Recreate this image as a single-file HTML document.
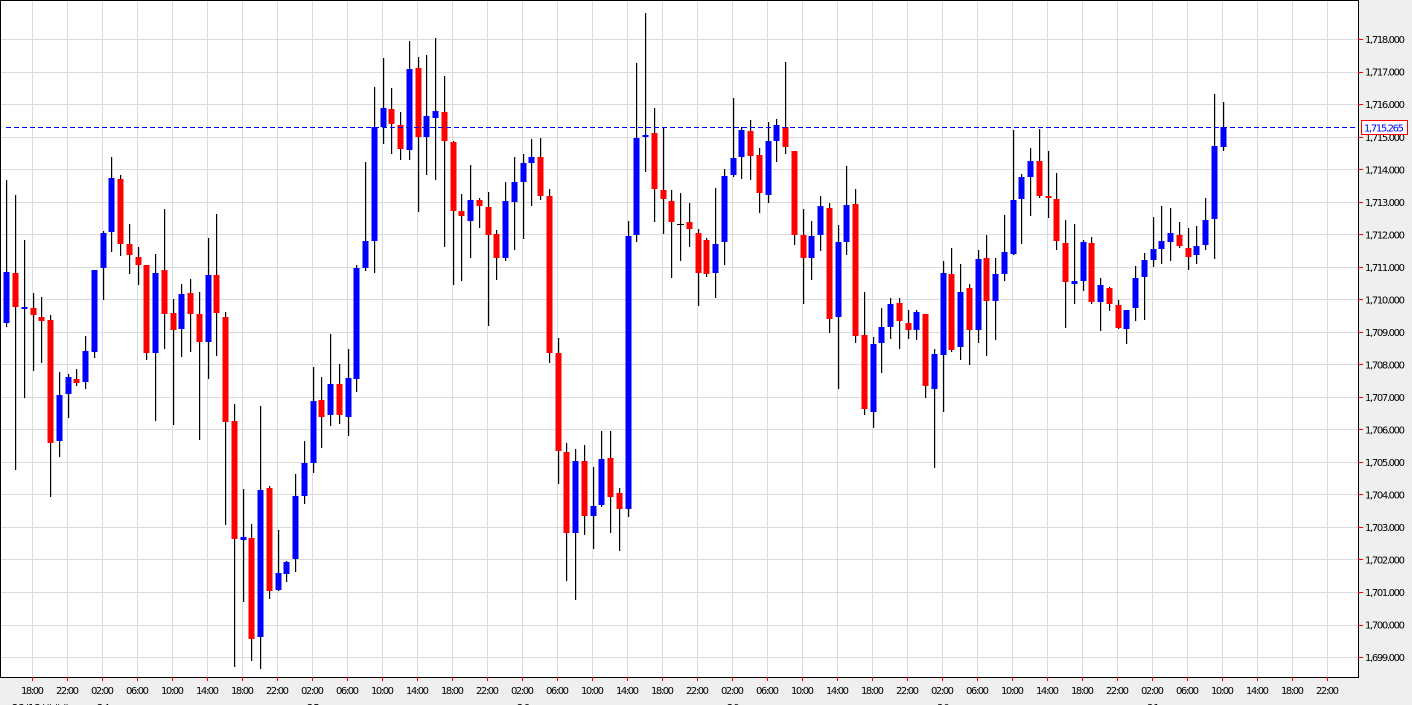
<!DOCTYPE html>
<html><head><meta charset="utf-8"><style>
html,body{margin:0;padding:0;background:#efefef;overflow:hidden}
svg{display:block}
text{font-family:"DejaVu Sans","Liberation Sans",sans-serif;fill:#000}
</style></head><body>
<svg id="s" width="1412" height="705" xmlns="http://www.w3.org/2000/svg">
<rect x="0" y="0" width="1412" height="705" fill="#efefef"/>
<rect x="0" y="0" width="1358" height="677" fill="#fff"/>
<g id="grid" stroke="#dcdcdc" stroke-width="1"></g>
<g id="candles"></g>
<line x1="6" y1="127.5" x2="1358" y2="127.5" stroke="#0000ff" stroke-width="1" stroke-dasharray="5,3"/>
<rect x="0.5" y="0.5" width="1358" height="677" fill="none" stroke="#000" stroke-width="1"/>
<g id="ticks" stroke="#f00" stroke-width="1"></g>
<g font-size="10">
<text x="1365" y="43" textLength="40">1,718.000</text>
<text x="1365" y="75.5" textLength="40">1,717.000</text>
<text x="1365" y="108" textLength="40">1,716.000</text>
<text x="1365" y="141" textLength="40">1,715.000</text>
<text x="1365" y="173.5" textLength="40">1,714.000</text>
<text x="1365" y="206" textLength="40">1,713.000</text>
<text x="1365" y="238.5" textLength="40">1,712.000</text>
<text x="1365" y="271" textLength="40">1,711.000</text>
<text x="1365" y="303.5" textLength="40">1,710.000</text>
<text x="1365" y="336" textLength="40">1,709.000</text>
<text x="1365" y="368.5" textLength="40">1,708.000</text>
<text x="1365" y="401" textLength="40">1,707.000</text>
<text x="1365" y="433.5" textLength="40">1,706.000</text>
<text x="1365" y="466" textLength="40">1,705.000</text>
<text x="1365" y="498.5" textLength="40">1,704.000</text>
<text x="1365" y="531" textLength="40">1,703.000</text>
<text x="1365" y="563.5" textLength="40">1,702.000</text>
<text x="1365" y="596" textLength="40">1,701.000</text>
<text x="1365" y="628.5" textLength="40">1,700.000</text>
<text x="1365" y="661" textLength="40">1,699.000</text>
</g>
<rect x="1361.5" y="120.5" width="46" height="14" fill="#fff" stroke="#f00" stroke-width="1"/>
<text x="1364" y="131.5" font-size="10" textLength="40" style="fill:#00f">1,715.265</text>
<g id="tl" font-size="10">
<text x="21" y="694" textLength="23">18:00</text><text x="56" y="694" textLength="23">22:00</text><text x="91" y="694" textLength="23">02:00</text><text x="126" y="694" textLength="23">06:00</text><text x="161" y="694" textLength="23">10:00</text><text x="196" y="694" textLength="23">14:00</text>
<text x="231" y="694" textLength="23">18:00</text><text x="266" y="694" textLength="23">22:00</text><text x="301" y="694" textLength="23">02:00</text><text x="336" y="694" textLength="23">06:00</text><text x="371" y="694" textLength="23">10:00</text><text x="406" y="694" textLength="23">14:00</text>
<text x="441" y="694" textLength="23">18:00</text><text x="476" y="694" textLength="23">22:00</text><text x="511" y="694" textLength="23">02:00</text><text x="546" y="694" textLength="23">06:00</text><text x="581" y="694" textLength="23">10:00</text><text x="616" y="694" textLength="23">14:00</text>
<text x="651" y="694" textLength="23">18:00</text><text x="686" y="694" textLength="23">22:00</text><text x="721" y="694" textLength="23">02:00</text><text x="756" y="694" textLength="23">06:00</text><text x="791" y="694" textLength="23">10:00</text><text x="826" y="694" textLength="23">14:00</text>
<text x="861" y="694" textLength="23">18:00</text><text x="896" y="694" textLength="23">22:00</text><text x="931" y="694" textLength="23">02:00</text><text x="966" y="694" textLength="23">06:00</text><text x="1001" y="694" textLength="23">10:00</text><text x="1036" y="694" textLength="23">14:00</text>
<text x="1071" y="694" textLength="23">18:00</text><text x="1106" y="694" textLength="23">22:00</text><text x="1141" y="694" textLength="23">02:00</text><text x="1176" y="694" textLength="23">06:00</text><text x="1211" y="694" textLength="23">10:00</text><text x="1246" y="694" textLength="23">14:00</text>
<text x="1281" y="694" textLength="23">18:00</text><text x="1316" y="694" textLength="23">22:00</text>
</g>
<g font-size="10">
<text x="12" y="711">23/12/### </text>
<text x="97" y="711">24</text>
<text x="307" y="711">25</text>
<text x="517" y="711">26</text>
<text x="727" y="711">29</text>
<text x="937" y="711">30</text>
<text x="1147" y="711">31</text>
</g>
</svg>
<script>
var NS="http://www.w3.org/2000/svg";
function el(p,n,a){var e=document.createElementNS(NS,n);for(var k in a)e.setAttribute(k,a[k]);p.appendChild(e);return e;}
var g=document.getElementById('grid'),t=document.getElementById('ticks'),c=document.getElementById('candles');
for(var k=0;k<38;k++){var x=32.5+35*k;el(g,'line',{x1:x,y1:1,x2:x,y2:677});el(t,'line',{x1:x,y1:677,x2:x,y2:681});}
for(var k=0;k<20;k++){var y=Math.round(39+32.53*k)+0.5;el(g,'line',{x1:1,y1:y,x2:1358,y2:y});el(t,'line',{x1:1358,y1:y,x2:1363,y2:y});}
var D=[
[272,323,180,327,'b'],[273,307,195,470,'r'],[307,307,240,398,'b'],[308,315,293,371,'r'],[317,321,297,363,'r'],[320,443,315,497,'r'],[395,441,372,457,'b'],[377,394,374,418,'b'],[379,383,369,386,'r'],[351,382,336,389,'b'],
[270,352,270,358,'b'],[233,268,231,300,'b'],[178,232,157,252,'b'],[179,244,175,256,'r'],[244,255,224,274,'r'],[257,265,247,285,'r'],[265,353,265,360,'r'],[273,353,254,421,'b'],[270,314,209,349,'r'],[313,330,299,425,'r'],
[294,329,284,357,'b'],[293,314,279,352,'r'],[314,342,292,440,'r'],[275,342,238,379,'b'],[275,313,214,356,'r'],[317,422,312,525,'r'],[421,539,404,667,'r'],[537,540,489,602,'b'],[538,639,524,661,'r'],[490,637,406,669,'b'],
[488,591,486,599,'r'],[573,590,530,591,'b'],[562,574,561,582,'b'],[496,559,474,572,'b'],[463,496,441,504,'b'],[401,463,367,473,'b'],[400,417,377,448,'r'],[384,415,334,426,'b'],[384,415,364,424,'r'],[378,417,349,436,'b'],
[268,379,265,392,'b'],[241,268,162,271,'b'],[127,241,87,273,'b'],[108,127,58,144,'b'],[109,124,88,154,'r'],[125,149,112,160,'r'],[69,150,41,160,'b'],[68,137,57,212,'r'],[116,137,55,175,'b'],[111,118,38,180,'b'],
[112,141,76,247,'r'],[142,211,141,285,'r'],[211,216,194,281,'r'],[200,221,165,258,'b'],[200,206,198,228,'r'],[207,235,192,326,'r'],[234,258,230,280,'r'],[201,258,182,261,'b'],[182,202,157,250,'b'],[163,182,154,239,'b'],
[157,163,139,206,'b'],[157,196,138,200,'r'],[196,353,189,363,'r'],[353,451,338,484,'r'],[452,533,443,581,'r'],[461,533,449,600,'b'],[461,516,445,535,'r'],[506,516,467,549,'b'],[459,505,431,507,'b'],[458,497,431,533,'r'],
[493,509,488,551,'r'],[236,509,221,517,'b'],[138,235,63,242,'b'],[135,136,13,172,'b'],[133,189,108,222,'r'],[190,199,127,234,'r'],[201,222,190,278,'r'],[224,224,193,261,'k'],[222,229,203,247,'r'],[233,273,229,306,'r'],
[240,274,238,277,'r'],[244,273,188,298,'b'],[176,242,169,265,'b'],[158,175,98,177,'b'],[130,157,127,179,'b'],[131,156,120,180,'r'],[155,193,148,213,'r'],[141,195,122,203,'b'],[125,141,119,162,'b'],[127,147,62,154,'r'],
[151,235,151,245,'r'],[235,258,209,304,'r'],[236,258,221,280,'b'],[206,235,196,251,'b'],[208,319,203,333,'r'],[242,317,225,389,'b'],[205,242,166,255,'b'],[204,336,189,343,'r'],[335,409,292,415,'r'],[344,412,337,428,'b'],
[327,343,308,373,'b'],[304,327,298,339,'b'],[303,321,298,349,'r'],[323,330,310,339,'r'],[312,330,310,340,'b'],[314,386,314,398,'r'],[354,389,349,468,'b'],[273,355,261,412,'b'],[274,350,248,352,'r'],[292,347,264,360,'b'],
[288,330,284,365,'r'],[259,330,250,343,'b'],[258,301,235,356,'r'],[274,301,258,340,'b'],[252,274,215,281,'b'],[200,254,130,255,'b'],[177,199,174,244,'b'],[161,177,148,216,'b'],[161,196,129,198,'r'],[196,197,151,218,'r'],
[199,241,173,250,'r'],[243,282,220,328,'r'],[281,284,224,304,'b'],[242,281,240,291,'b'],[243,302,237,304,'r'],[285,302,278,331,'b'],[288,304,287,311,'r'],[305,328,300,329,'r'],[310,329,310,344,'b'],[278,308,266,321,'b'],
[260,277,253,320,'b'],[249,260,217,267,'b'],[241,249,206,264,'b'],[233,242,208,261,'b'],[235,246,222,248,'r'],[248,257,228,270,'r'],[246,255,226,264,'b'],[220,245,198,250,'b'],[146,219,94,259,'b'],[127,147,102,151,'b']
];
var col={r:'#ff0000',b:'#0000ff',k:'#000'};
for(var i=0;i<D.length;i++){var d=D[i],x=Math.round(6.4+8.75*i);
el(c,'rect',{x:x,y:d[2],width:1.2,height:Math.max(1,d[3]-d[2]),fill:'#000'});
if(d[4]=='k'){el(c,'rect',{x:x-3,y:d[0],width:7,height:1,fill:'#000'});}
else el(c,'rect',{x:x-2.5,y:d[0],width:6,height:Math.max(2,d[1]-d[0]),fill:col[d[4]]});}
</script>
</body></html>
